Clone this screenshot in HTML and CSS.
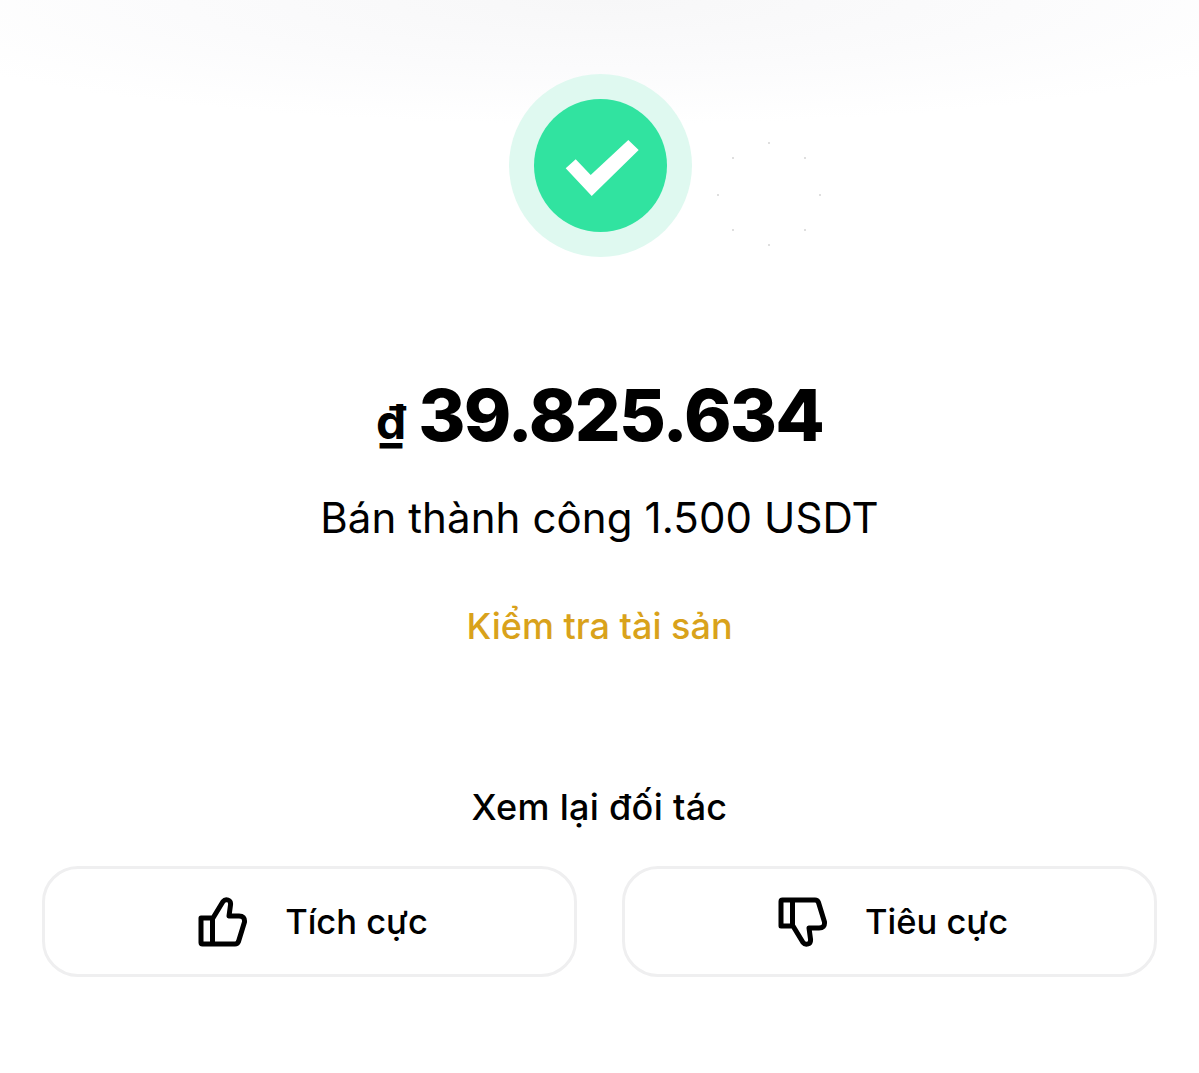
FILE: index.html
```html
<!DOCTYPE html>
<html lang="vi">
<head>
<meta charset="utf-8">
<title>Bán thành công</title>
<link rel="stylesheet" href="styles.css">
</head>
<body>
<main class="page">
  <div class="hero">
    <svg class="badge" width="183" height="183" viewBox="0 0 183 183" aria-hidden="true">
      <circle cx="91.5" cy="91.5" r="91.5" fill="#dff9f0"/>
      <circle cx="91.5" cy="91.5" r="66.5" fill="#31e3a0"/>
      <polygon points="66.7,85.3 56.7,94.3 82.7,122 129.7,76 119.3,66 81.7,101" fill="#fff"/>
    </svg>
    <svg class="sparks" width="110" height="110" viewBox="0 0 110 110" aria-hidden="true">
      <g fill="#d4d4d4">
        <circle cx="54" cy="3" r="1"/><circle cx="18" cy="18" r="1"/><circle cx="90" cy="18" r="1"/>
        <circle cx="3" cy="55" r="1"/><circle cx="105" cy="55" r="1"/><circle cx="18" cy="90" r="1"/>
        <circle cx="90" cy="90" r="1"/><circle cx="54" cy="105" r="1"/>
      </g>
    </svg>
  </div>
  <h1 class="amount"><span class="currency">₫</span> 39.825.634</h1>
  <p class="message">Bán thành công 1.500 USDT</p>
  <a class="link" href="#">Kiểm tra tài sản</a>
  <h2 class="review-title">Xem lại đối tác</h2>
  <div class="actions">
    <button class="action" type="button">
      <svg class="thumb" width="50" height="50" viewBox="0 0 50 50" aria-hidden="true">
        <path d="M3 21H15L25 4.500Q27 2 30 3Q33 4 32.500 8L31 19H41Q47 19 46.500 25L40.500 44.500Q39.500 47 37 47H4.500Q3 47 3 45.500ZM14.500 21V47"/>
      </svg>
      <span>Tích cực</span>
    </button>
    <button class="action" type="button">
      <svg class="thumb" width="50" height="50" viewBox="0 0 50 50" aria-hidden="true">
        <path d="M3 29H15L25 45.500Q27 48 30 47Q33 46 32.500 42L31 31H41Q47 31 46.500 25L40.500 5.500Q39.500 3 37 3H4.500Q3 3 3 4.500ZM14.500 29V3"/>
      </svg>
      <span>Tiêu cực</span>
    </button>
  </div>
</main>
</body>
</html>
```
FILE: styles.css
```css
* { box-sizing: border-box; }
html, body { margin: 0; height: 100%; }
body {
  background:
    radial-gradient(ellipse 760px 125px at 50% 0, #f7f7f8 0%, #fbfbfc 55%, rgba(255,255,255,0) 100%),
    #fff;
  background-repeat: no-repeat;
  color: #000;
  font-family: Inter, "Open Sans", "Liberation Sans", sans-serif;
}
.page {
  display: flex;
  flex-direction: column;
  align-items: center;
  padding: 74px 42px 0;
  text-align: center;
}
.hero { position: relative; width: 183px; height: 183px; margin-left: 2px; }
.badge { display: block; }
.sparks { position: absolute; left: 206px; top: 66px; }
.amount {
  margin: 113px 0 0;
  font-size: 72px;
  line-height: 90px;
  font-weight: 800;
  letter-spacing: -1.8px;
  white-space: nowrap;
}
.currency { font-size: 48px; font-weight: 700; vertical-align: 2px; }
.message {
  margin: 24px 0 0;
  font-size: 42px;
  line-height: 54px;
  letter-spacing: 0.1px;
}
.link {
  margin-top: 54px;
  font-size: 36px;
  line-height: 54px;
  font-weight: 500;
  color: #d9a21b;
  text-decoration: none;
}
.review-title {
  margin: 127px 0 0;
  font-size: 36px;
  line-height: 54px;
  font-weight: 500;
  letter-spacing: 0.3px;
}
.actions {
  align-self: stretch;
  display: grid;
  grid-template-columns: 535px 535px;
  justify-content: space-between;
  margin-top: 32px;
}
.action {
  display: flex;
  align-items: center;
  justify-content: center;
  gap: 37px;
  height: 111px;
  padding: 0 0 0 7px;
  background: #fff;
  border: 3px solid #efeff0;
  border-radius: 36px;
  color: #000;
  font: 500 34.500px Inter, "Open Sans", "Liberation Sans", sans-serif;
}
.thumb {
  fill: none;
  stroke: #000;
  stroke-width: 5;
  stroke-linejoin: round;
}
```
